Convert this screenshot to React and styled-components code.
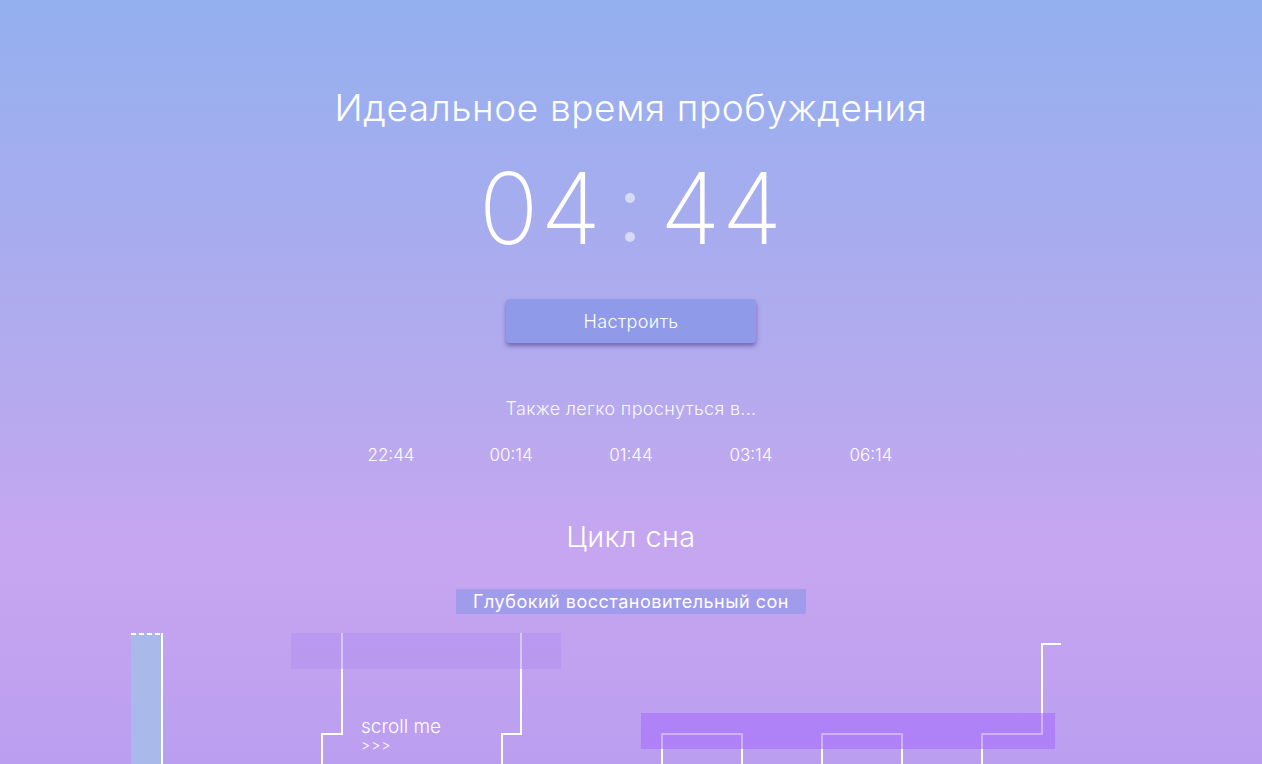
import React from "react";
import styled, { createGlobalStyle } from "styled-components";

const GlobalStyle = createGlobalStyle`
	html, body {
		margin: 0;
		padding: 0;
	}
	body {
		font-family: Inter, "Open Sans", sans-serif;
		color: #fff;
	}
`;

const Page = styled.div`
	height: 764px;
	overflow: hidden;
	display: flex;
	flex-direction: column;
	align-items: center;
	padding-top: 86px;
	box-sizing: border-box;
	background: linear-gradient(
		180deg,
		#94b0ef 0%,
		#b4aaee 50%,
		#c7a6f0 73%,
		#bb9ef0 100%
	);
	& > * {
		flex-shrink: 0;
	}
`;

const Title = styled.h1`
	margin: 0;
	font-size: 37px;
	line-height: 43px;
	font-weight: 300;
	letter-spacing: 0.6px;
`;

const Clock = styled.div`
	display: flex;
	align-items: center;
	margin-top: 29px;
	height: 100px;
`;

const Digits = styled.span`
	font-size: 99px;
	line-height: 100px;
	font-weight: 200;
	letter-spacing: 2px;
	&:last-child {
		letter-spacing: 1px;
	}
`;

const Colon = styled.div`
	display: flex;
	flex-direction: column;
	gap: 29px;
	margin: 0 25px 0 22px;
	padding-top: 18px;
`;

const Dot = styled.span`
	width: 10px;
	height: 10px;
	border-radius: 50%;
	background: rgba(255, 255, 255, 0.55);
`;

const SetupButton = styled.button`
	margin-top: 41px;
	width: 250px;
	height: 44px;
	border: none;
	border-radius: 4px;
	background: #8f9be8;
	color: #fff;
	font-family: inherit;
	font-size: 18px;
	font-weight: 300;
	letter-spacing: 0.4px;
	box-shadow: 0 3px 4px rgba(70, 50, 130, 0.55);
	cursor: pointer;
`;

const Hint = styled.p`
	margin: 56px 0 0;
	font-size: 18px;
	line-height: 20px;
	font-weight: 300;
	letter-spacing: 0.3px;
	color: rgba(255, 255, 255, 0.95);
`;

const TimeList = styled.div`
	display: flex;
	margin-top: 26px;
`;

const TimeItem = styled.span`
	width: 120px;
	text-align: center;
	font-size: 17px;
	line-height: 20px;
	font-weight: 300;
`;

const SectionTitle = styled.h2`
	margin: 55px 0 0;
	font-size: 29px;
	line-height: 34px;
	font-weight: 300;
	letter-spacing: 0.4px;
`;

const PhaseLabel = styled.div`
	margin-top: 35px;
	width: 350px;
	height: 25px;
	display: flex;
	align-items: center;
	justify-content: center;
	background: #a09bea;
	font-size: 18px;
	font-weight: 400;
	letter-spacing: 0.5px;
`;

const Chart = styled.div`
	position: relative;
	margin-top: 16px;
	width: 1262px;
	height: 200px;
`;

const ScrollHint = styled.div`
	position: absolute;
	left: 361px;
	top: 87px;
	font-size: 19px;
	line-height: 20px;
	font-weight: 300;
	small {
		display: block;
		font-size: 14px;
		line-height: 16px;
		letter-spacing: 1px;
	}
`;

const Hypnogram = () => (
	<svg width='1262' height='200' viewBox='0 630 1262 200'>
		<rect x='131' y='633' width='30' height='200' fill='#a9b9ea' />
		<line x1='131' y1='634' x2='161' y2='634' stroke='#fff' strokeWidth='2' strokeDasharray='5 3' />
		<g stroke='#fff' strokeWidth='2' fill='none'>
			<path d='M162 633V830' />
			<path d='M322 830V734H342V633' />
			<path d='M502 830V734H521V633' />
			<path d='M662 830V734H742V830' />
			<path d='M822 830V734H902V830' />
			<path d='M982 830V734H1042V644H1061' />
		</g>
		<rect x='291' y='633' width='270' height='36' fill='#b18ff0' fillOpacity='0.5' />
		<rect x='641' y='713' width='414' height='36' fill='#a263fe' fillOpacity='0.5' />
	</svg>
);

export default function App() {
	const times = ["22:44", "00:14", "01:44", "03:14", "06:14"];
	return (
		<>
			<GlobalStyle />
			<Page>
				<Title>Идеальное время пробуждения</Title>
				<Clock>
					<Digits>04</Digits>
					<Colon>
						<Dot />
						<Dot />
					</Colon>
					<Digits>44</Digits>
				</Clock>
				<SetupButton>Настроить</SetupButton>
				<Hint>Также легко проснуться в...</Hint>
				<TimeList>
					{times.map((t) => (
						<TimeItem key={t}>{t}</TimeItem>
					))}
				</TimeList>
				<SectionTitle>Цикл сна</SectionTitle>
				<PhaseLabel>Глубокий восстановительный сон</PhaseLabel>
				<Chart>
					<Hypnogram />
					<ScrollHint>
						scroll me
						<small>&gt;&gt;&gt;</small>
					</ScrollHint>
				</Chart>
			</Page>
		</>
	);
}
